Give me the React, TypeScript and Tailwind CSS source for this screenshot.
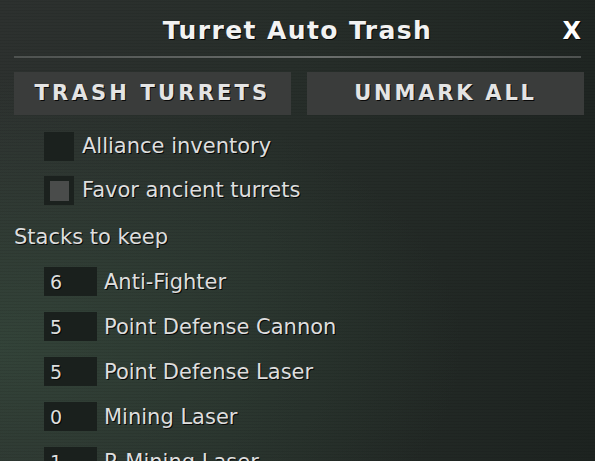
import React from "react";

const STACKS = [
  { id: "anti-fighter", value: "6", label: "Anti-Fighter" },
  { id: "pd-cannon", value: "5", label: "Point Defense Cannon" },
  { id: "pd-laser", value: "5", label: "Point Defense Laser" },
  { id: "mining", value: "0", label: "Mining Laser" },
  { id: "r-mining", value: "1", label: "R-Mining Laser" },
];

const OPTIONS = [
  { id: "alliance", label: "Alliance inventory", checked: false },
  { id: "ancient", label: "Favor ancient turrets", checked: true },
];

const shadow = "[text-shadow:1px_1px_0_rgba(0,0,0,0.85)]";

const App = () => {
  return (
    <div className="w-[595px] h-[461px] overflow-hidden font-['DejaVu_Sans',sans-serif] text-[#dedede] bg-[repeating-linear-gradient(0deg,rgba(0,0,0,0.07)_0px,rgba(0,0,0,0.07)_1px,transparent_1px,transparent_3px),radial-gradient(ellipse_at_0%_75%,rgba(60,90,70,0.45),transparent_55%),linear-gradient(100deg,#2d312f_0%,#272e2a_45%,#1d2320_100%)]">
      <div className="relative flex items-center justify-center h-[56px] pt-[5px]">
        <h1 className={`text-[25px] font-bold tracking-[1.4px] text-[#f2f2f2] ${shadow}`}>
          Turret Auto Trash
        </h1>
        <span className={`absolute right-[14px] top-[13px] text-[24px] font-bold text-white ${shadow}`}>
          X
        </span>
      </div>
      <div className="mx-[14px] h-[2px] bg-[linear-gradient(90deg,#4e5250,#6a6e6c_55%,#4e5250)]" />

      <div className="flex gap-[16px] pl-[14px] pt-[14px]">
        <button className={`w-[277px] h-[43px] bg-[#3a3c3b] text-[21px] font-bold tracking-[3.2px] text-[#e4e4e4] ${shadow}`}>
          TRASH TURRETS
        </button>
        <button className={`w-[277px] h-[43px] bg-[#3a3c3b] text-[21px] font-bold tracking-[2.8px] text-[#e4e4e4] ${shadow}`}>
          UNMARK ALL
        </button>
      </div>

      <div className="flex flex-col gap-[15px] pl-[44px] pt-[17px]">
        {OPTIONS.map((option) => (
          <div key={option.id} className="flex items-center gap-[8px] h-[29px]">
            <div className="w-[30px] h-[29px] bg-[#1b211e] flex items-center justify-center">
              {option.checked && <div className="w-[19px] h-[20px] bg-[#4a4c4b]" />}
            </div>
            <span className={`text-[21px] ${shadow}`}>{option.label}</span>
          </div>
        ))}
      </div>

      <p className={`pl-[14px] pt-[20px] text-[21px] leading-[24px] ${shadow}`}>Stacks to keep</p>

      <div className="flex flex-col gap-[16px] pl-[44px] pt-[18px]">
        {STACKS.map((stack) => (
          <div key={stack.id} className="flex items-center gap-[7px] h-[29px]">
            <div className={`w-[53px] h-[29px] bg-[#1a201d] pl-[6px] pt-[2px] flex items-center text-[19px] ${shadow}`}>
              {stack.value}
            </div>
            <span className={`text-[21px] pt-[2px] ${shadow}`}>{stack.label}</span>
          </div>
        ))}
      </div>
    </div>
  );
};

export default App;
